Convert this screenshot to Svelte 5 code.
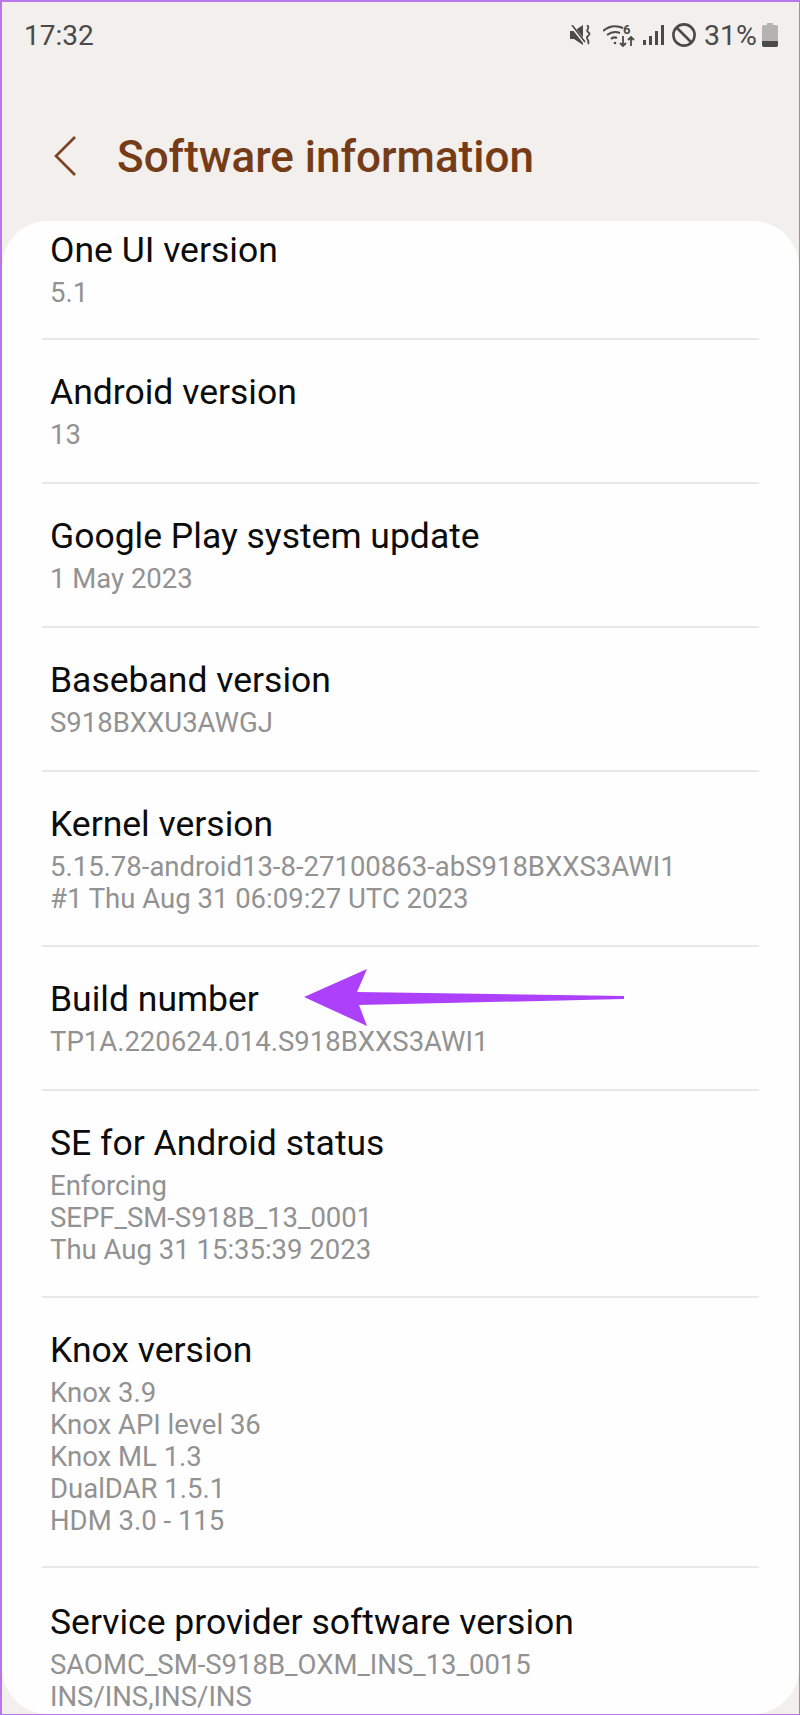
<script lang="ts">
	const rows = [
		{ title: 'One UI version', lines: ['5.1'], h: 119 },
		{ title: 'Android version', lines: ['13'], h: 144 },
		{ title: 'Google Play system update', lines: ['1 May 2023'], h: 144 },
		{ title: 'Baseband version', lines: ['S918BXXU3AWGJ'], h: 144 },
		{ title: 'Kernel version', lines: ['5.15.78-android13-8-27100863-abS918BXXS3AWI1', '#1 Thu Aug 31 06:09:27 UTC 2023'], h: 175 },
		{ title: 'Build number', lines: ['TP1A.220624.014.S918BXXS3AWI1'], h: 144 },
		{ title: 'SE for Android status', lines: ['Enforcing', 'SEPF_SM-S918B_13_0001', 'Thu Aug 31 15:35:39 2023'], h: 207 },
		{ title: 'Knox version', lines: ['Knox 3.9', 'Knox API level 36', 'Knox ML 1.3', 'DualDAR 1.5.1', 'HDM 3.0 - 115'], h: 270 },
		{ title: 'Service provider software version', lines: ['SAOMC_SM-S918B_OXM_INS_13_0015', 'INS/INS,INS/INS'], h: 144 }
	];
</script>

<div class="screen">
	<div class="status">
		<span class="time">17:32</span>
		<div class="indicators">
			<svg class="mute" width="22" height="20" viewBox="0 0 22 20" fill="#4a4a4a">
				<path d="M0 6h4l9-6v20l-9-6H0z" />
				<path d="M1 0l15 19" stroke="#f2efed" stroke-width="3.4" />
				<path d="M2 0l13 17" stroke="#4a4a4a" stroke-width="1.6" />
				<path d="M17 0c4 3-2 5 1 7 3 2 1 3-1 5-1 2 3 3 1 7" fill="none" stroke="#4a4a4a" stroke-width="1.8" />
			</svg>
			<svg class="wifi" width="32" height="24" viewBox="0 0 32 24" fill="none" stroke="#4a4a4a" stroke-width="2">
				<path d="M0 8c6-5 13-6 20-3" />
				<path d="M4 12c4-3 8-4 13-2" />
				<path d="M8 16c2-2 4-2 6-1" />
				<circle cx="12" cy="20" r="1.3" fill="#4a4a4a" stroke="none" />
				<path d="M20 13v10M17 20l3 3 3-3M28 23v-9M25 17l3-3 3 3" stroke-width="1.8" />
				<text x="20" y="11" class="six">6</text>
			</svg>
			<svg class="signal" width="21" height="20" viewBox="0 0 21 20" fill="#4a4a4a">
				<rect x="0" y="15" width="3" height="5" />
				<rect x="6" y="11" width="3" height="9" />
				<rect x="12" y="6" width="3" height="14" />
				<rect x="18" y="0" width="3" height="20" />
			</svg>
			<svg class="block" width="24" height="24" viewBox="0 0 24 24" fill="none" stroke="#4a4a4a" stroke-width="2.6">
				<circle cx="12" cy="12" r="10.6" />
				<path d="M4.5 4.5l15 15" />
			</svg>
			<span class="pct">31%</span>
			<svg class="battery" width="16" height="24" viewBox="0 0 16 24">
				<path d="M5 0h6v2h3a2 2 0 0 1 2 2v18a2 2 0 0 1-2 2H2a2 2 0 0 1-2-2V4a2 2 0 0 1 2-2h3z" fill="#b5b3b1" />
				<path d="M0 18h16v4a2 2 0 0 1-2 2H2a2 2 0 0 1-2-2z" fill="#4a4a4a" />
			</svg>
		</div>
	</div>

	<div class="header">
		<svg class="back" width="26" height="42" viewBox="0 0 26 42" fill="none" stroke="#7a4221" stroke-width="2.6">
			<path d="M22 2L3 21l19 19" />
		</svg>
		<h1>Software information</h1>
	</div>

	<div class="list">
		{#each rows as row, i}
			<div class="row" class:first={i === 0} style="height: {row.h}px">
				<div class="title">{row.title}</div>
				{#each row.lines as line}
					<div class="sub">{line}</div>
				{/each}
			</div>
		{/each}
		<svg class="arrow" width="320" height="57" viewBox="0 0 320 57">
			<path d="M0 28L63 0 53 23 320 27V30L55 36 63 57z" fill="#ad40fb" />
		</svg>
	</div>
</div>

<style>
	:global(body) {
		margin: 0;
		background: #f2efed;
	}

	.screen {
		width: 800px;
		height: 1715px;
		box-sizing: border-box;
		border: solid #b877e8;
		border-width: 2px 1px 1px 2px;
		background: #f2efed;
		font-family: Roboto, sans-serif;
		overflow: hidden;
	}

	.status {
		height: 66px;
		display: flex;
		align-items: center;
		justify-content: space-between;
		padding: 0 21px 0 22px;
		color: #4a4a4a;
		box-sizing: border-box;
	}

	.time {
		font-size: 28px;
	}

	.indicators {
		display: flex;
		align-items: center;
		gap: 8px;
	}

	.mute {
		margin-right: 3px;
	}

	.pct {
		font-size: 28.5px;
		margin-right: -3px;
	}

	.six {
		font-family: Roboto, sans-serif;
		font-size: 13px;
		font-weight: 700;
		fill: #4a4a4a;
		stroke: none;
	}

	.header {
		height: 153px;
		display: flex;
		align-items: center;
		gap: 38px;
		padding: 23px 0 0 51px;
		box-sizing: border-box;
	}

	h1 {
		margin: 2px 0 0;
		font-size: 44px;
		font-weight: 500;
		color: #753c17;
	}

	.list {
		position: relative;
		background: #fefefe;
		border-radius: 46px;
		padding: 0 40px;
		height: 1493px;
		overflow: hidden;
	}

	.row {
		box-sizing: border-box;
		padding: 30px 0 0 8px;
		border-bottom: 2px solid #e8e8e8;
	}

	.row.first {
		padding-top: 7px;
	}

	.row:last-of-type {
		padding-top: 32px;
		border-bottom: none;
	}

	.title {
		font-size: 35.5px;
		line-height: 44px;
		color: #0c0c0c;
		margin-bottom: 5px;
	}

	.sub {
		font-size: 27.5px;
		line-height: 32px;
		color: #929292;
	}

	.arrow {
		position: absolute;
		left: 302px;
		top: 748px;
	}
</style>
